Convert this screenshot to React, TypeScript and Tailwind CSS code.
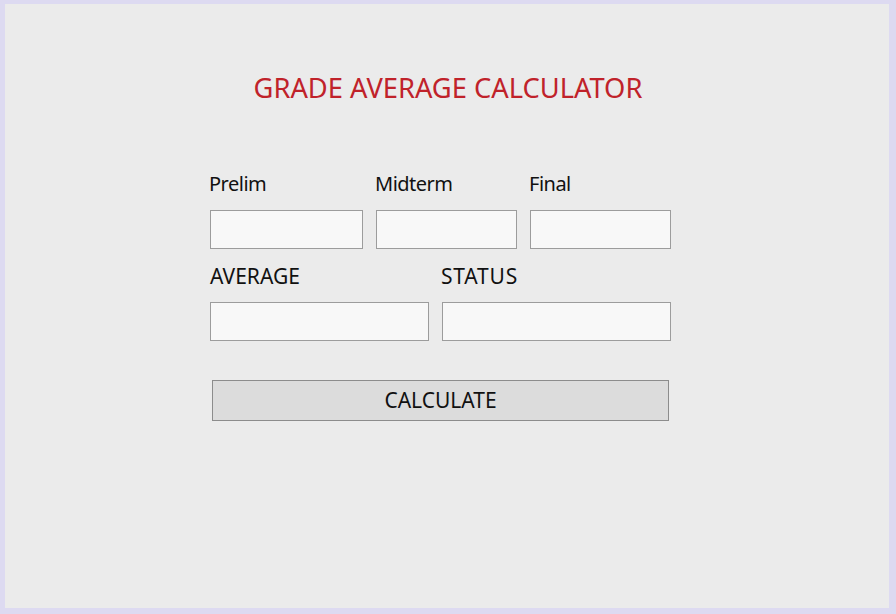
import React from 'react';

const Field: React.FC<{ label: string; width: string; labelClass?: string }> = ({ label, width, labelClass }) => (
  <div className={`flex flex-col ${width}`}>
    <span className={`h-[24px] leading-[24px] text-[#111] ${labelClass ?? ''}`}>{label}</span>
    <input className="mt-[14px] h-[39px] w-full border border-[#9c9c9c] bg-[#f8f8f8] outline-none" />
  </div>
);

const App: React.FC = () => {
  return (
    <div className="w-[896px] h-[614px] bg-[#dddaf1] pt-[4px] pl-[5px] pr-[7px] pb-[6px]" style={{ fontFamily: '"Noto Sans", "Open Sans", sans-serif' }}>
      <div className="h-full w-full bg-[#ebebeb] flex flex-col">
        <h1 className="mt-[67px] text-center text-[27.3px] leading-[34px] text-[#c0222a] pl-[2px]">
          GRADE AVERAGE CALCULATOR
        </h1>
        <div className="ml-[205px] mt-[67px] w-[461px] flex flex-col">
          <div className="flex gap-[13px]">
            <Field label="Prelim" width="w-[153px]" labelClass="text-[20px] tracking-[-0.5px] -ml-[1px]" />
            <Field label="Midterm" width="w-[141px]" labelClass="text-[20px] tracking-[-0.5px] -ml-[1px]" />
            <Field label="Final" width="w-[141px]" labelClass="text-[20px] tracking-[-0.5px] -ml-[1px]" />
          </div>
          <div className="flex gap-[13px] mt-[15px]">
            <Field label="AVERAGE" width="w-[219px]" labelClass="text-[21px]" />
            <Field label="STATUS" width="w-[229px]" labelClass="text-[21px] tracking-[0.8px] -ml-[1px]" />
          </div>
          <button className="mt-[39px] ml-[2px] w-[457px] h-[41px] border border-[#8c8c8c] bg-[#dcdcdc] text-[21px] text-[#111]">
            CALCULATE
          </button>
        </div>
      </div>
    </div>
  );
};

export default App;
